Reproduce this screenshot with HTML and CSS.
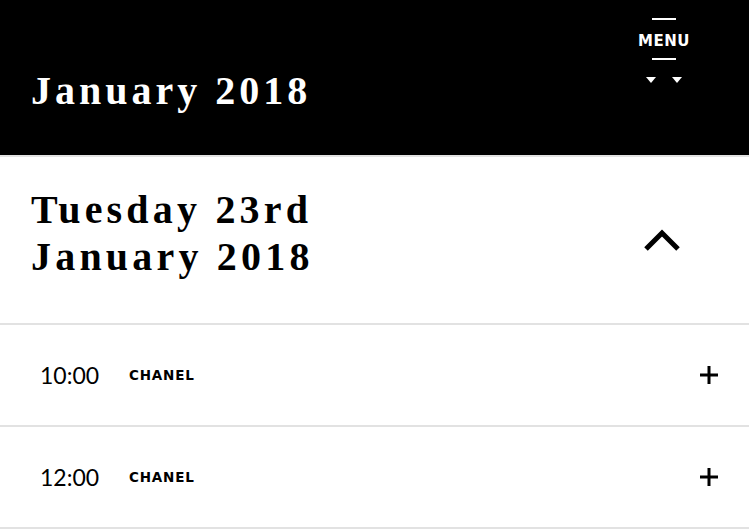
FILE: index.html
```html
<!DOCTYPE html>
<html>
<head>
<meta charset="utf-8">
<link rel="stylesheet" href="styles.css">
</head>
<body>
<header class="top">
  <h1 class="top-title">January 2018</h1>
  <div class="menu">
    <span class="menu-line"></span>
    <span class="menu-label">MENU</span>
    <span class="menu-line"></span>
    <span class="menu-arrows">
      <svg width="10" height="6" viewBox="0 0 10 6"><path d="M0 0H10L5 6Z" fill="#fff"/></svg>
      <svg width="10" height="6" viewBox="0 0 10 6"><path d="M0 0H10L5 6Z" fill="#fff"/></svg>
    </span>
  </div>
</header>
<section class="day">
  <h2 class="day-title">Tuesday 23rd<br>January 2018</h2>
  <svg class="chevron" width="40" height="24" viewBox="0 0 40 24"><path d="M3 21L19 5L35 21" fill="none" stroke="#000" stroke-width="5"/></svg>
</section>
<div class="row">
  <span class="time">10:00</span>
  <span class="brand">CHANEL</span>
  <svg class="plus" width="18" height="18" viewBox="0 0 18 18"><path d="M9 0V18M0 9H18" stroke="#000" stroke-width="3"/></svg>
</div>
<div class="row">
  <span class="time">12:00</span>
  <span class="brand">CHANEL</span>
  <svg class="plus" width="18" height="18" viewBox="0 0 18 18"><path d="M9 0V18M0 9H18" stroke="#000" stroke-width="3"/></svg>
</div>
</body>
</html>
```
FILE: styles.css
```css
* { box-sizing: border-box; }
body { margin: 0; background: #fff; font-family: "Liberation Serif", serif; overflow: hidden; }
.top {
  background: #000; color: #fff; height: 157px;
  display: flex; justify-content: space-between; align-items: flex-start;
  padding: 0 60px 0 31px;
  border-bottom: 2px solid #e2e2e2;
}
.top-title {
  margin: 67px 0 0; font-size: 40px; font-weight: 700; letter-spacing: 4px; line-height: 48px;
}
.menu { display: flex; flex-direction: column; align-items: center; padding-top: 18px; width: 50px; }
.menu-line { display: block; width: 24px; height: 2px; background: #fff; }
.menu-label {
  font-family: "DejaVu Sans", sans-serif; font-weight: 700; font-size: 15px; letter-spacing: 0.5px;
  margin: 15px 0 11px; line-height: 12px;
}
.menu-arrows { display: flex; gap: 16px; margin-top: 17px; }
.menu-arrows svg { display: block; }
.day {
  height: 168px; display: flex; justify-content: space-between; align-items: center;
  padding: 0 66px 0 31px; border-bottom: 2px solid #e2e2e2;
}
.day-title { margin: 0 0 14px; font-size: 40px; font-weight: 700; letter-spacing: 4.2px; line-height: 47px; }
.row {
  height: 102px; display: flex; align-items: center; padding: 0 31px 0 40px;
  border-bottom: 2px solid #e2e2e2;
}
.time { font-family: Lato, sans-serif; font-weight: 400; font-size: 23px; width: 89px; color: #000; }
.brand { font-family: "DejaVu Sans", sans-serif; font-weight: 700; font-size: 13.5px; letter-spacing: 0.8px; flex: 1; }
.plus { display: block; }
```
